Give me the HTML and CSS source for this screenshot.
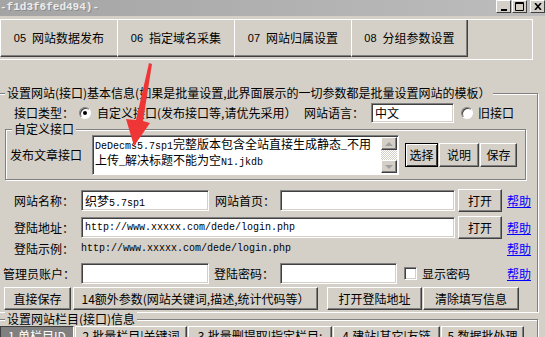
FILE: index.html
```html
<!DOCTYPE html>
<html lang="zh-CN">
<head>
    <meta charset="UTF-8">
    <meta name="viewport" content="width=device-width, initial-scale=1.0">
    <title>网站接口设置</title>
    <link rel="stylesheet" href="styles.css">
</head>
<body>
<!-- Title bar -->
<div class="titlebar">
    <span class="caption">-f1d3f6fed494)-</span>
    <div class="win-btns">
        <span class="win-btn"><svg width="8" height="8" viewBox="0 0 8 8"><rect x="1" y="6" width="6" height="2"/></svg></span>
        <span class="win-btn"><svg width="9" height="9" viewBox="0 0 9 9"><path d="M0.5 0.5h8v8h-8z M0.5 1.5h8" fill="none" stroke="#000"/></svg></span>
        <span class="win-btn close"><svg width="8" height="7" viewBox="0 0 8 7"><path d="M1 0L7 7M7 0L1 7" stroke="#000" stroke-width="1.6"/></svg></span>
    </div>
</div>

<!-- Top tool buttons -->
<div class="toolbar">
    <div class="tool"><span class="num">05</span>网站数据发布</div>
    <div class="tool"><span class="num">06</span>指定域名采集</div>
    <div class="tool"><span class="num">07</span>网站归属设置</div>
    <div class="tool"><span class="num">08</span>分组参数设置</div>
</div>

<fieldset class="group main">
    <legend>设置网站(接口)基本信息(如果是批量设置,此界面展示的一切参数都是批量设置网站的模板）</legend>

    <div class="row type-row">
        <span class="label">接口类型：</span>
        <span class="radio on"></span>
        <span class="radio-text">自定义接口(发布接口等,请优先采用）</span>
        <span class="label">网站语言：</span>
        <div class="field lang">中文</div>
        <span class="radio"></span>
        <span class="old">旧接口</span>
    </div>

    <fieldset class="group custom">
        <legend>自定义接口</legend>
        <div class="row memo-row">
            <span class="label wide">发布文章接口</span>
            <div class="memo">
                <div class="memo-text"><span class="mono">DeDecms5.7sp1</span>完整版本包含全站直接生成静态<span class="mono">_</span>不用<br>上传<span class="mono">_</span>解决标题不能为空<span class="mono">N1.jkdb</span></div>
                <div class="scroll">
                    <span class="sb-btn"><i class="up"></i></span>
                    <span class="sb-track"></span>
                    <span class="sb-btn"><i class="down"></i></span>
                </div>
            </div>
            <div class="btn-set">
                <button class="btn focus w33">选择</button>
                <button class="btn w40">说明</button>
                <button class="btn w37">保存</button>
            </div>
        </div>
    </fieldset>

    <div class="row name-row">
        <span class="label">网站名称：</span>
        <div class="field short">织梦<span class="mono">5.7sp1</span></div>
        <span class="label mid">网站首页：</span>
        <div class="field home"></div>
        <button class="btn open">打开</button>
        <a class="help" href="#">帮助</a>
    </div>

    <div class="row login-row">
        <span class="label">登陆地址：</span>
        <div class="field long mono">http://www.xxxxx.com/dede/login.php</div>
        <button class="btn open">打开</button>
        <a class="help" href="#">帮助</a>
    </div>

    <div class="row example-row">
        <span class="label">登陆示例：</span>
        <span class="example mono">http://www.xxxxx.com/dede/login.php</span>
        <a class="help" href="#">帮助</a>
    </div>

    <div class="row admin-row">
        <span class="label admin">管理员账户：</span>
        <div class="field short"></div>
        <span class="label mid2">登陆密码：</span>
        <div class="field pass"></div>
        <span class="check"></span>
        <span class="check-text">显示密码</span>
        <a class="help" href="#">帮助</a>
    </div>

    <div class="row action-row">
        <button class="btn save">直接保存</button>
        <button class="btn extra">14额外参数(网站关键词,描述,统计代码等）</button>
        <button class="btn login-open">打开登陆地址</button>
        <button class="btn clear">清除填写信息</button>
    </div>
</fieldset>

<fieldset class="group columns">
    <legend>设置网站栏目(接口)信息</legend>
    <div class="tabs">
        <span class="tab active t1">1.单栏目ID</span>
        <span class="tab t2">2.批量栏目|关键词</span>
        <span class="tab t3">3.批量删提取|指定栏目:</span>
        <span class="tab t4">4.建站|其它|友链</span>
        <span class="tab t5">5.数据批处理</span>
    </div>
</fieldset>

<!-- red annotation arrow -->
<svg class="arrow" width="30" height="88" viewBox="124 62 30 88">
    <polygon points="149,63 152,64 143,121 150,123 134,146 126,119 136,120" fill="#ef3636"/>
</svg>
</body>
</html>
```

FILE: styles.css
```css
* {
    box-sizing: border-box;
}

body {
    margin: 0;
    width: 545px;
    height: 337px;
    overflow: hidden;
    position: relative;
    background: #d4d0c8;
    color: #000;
    font-family: "Noto Sans CJK SC", "Liberation Sans", sans-serif;
    font-size: 12px;
    line-height: 14px;
}

.mono {
    font-family: "Liberation Mono", "Noto Sans CJK SC", monospace;
    font-size: 10px;
}

/* Title bar */
.titlebar {
    height: 16px;
    display: flex;
    justify-content: space-between;
    align-items: flex-start;
    background: linear-gradient(to right, #a4a4a4, #bdbdbd);
}

.caption {
    font-family: "Liberation Mono", monospace;
    font-weight: bold;
    font-size: 11px;
    line-height: 15px;
    color: #ececec;
    text-shadow: 1px 1px 0 #8a8a8a;
}

.win-btns {
    display: flex;
    gap: 1px;
}

.win-btn {
    width: 15px;
    height: 13px;
    display: flex;
    align-items: center;
    justify-content: center;
    background: #d4d0c8;
    border: 1px solid;
    border-color: #fff #404040 #404040 #fff;
}

.win-btn.close {
    margin-left: 2px;
}

/* Tool buttons */
.toolbar {
    margin-top: 3px;
    width: 533px;
    height: 41px;
    display: flex;
    align-items: flex-start;
    border: 1px solid #fff;
    border-left: 0;
}

.tool {
    width: 117px;
    height: 37px;
    display: flex;
    align-items: center;
    justify-content: center;
    border-left: 1px solid #fff;
    border-bottom: 1px solid #404040;
    box-shadow: inset 0 -1px 0 #808080;
}

.tool:last-child {
    border-right: 1px solid #404040;
    box-shadow: inset -1px -1px 0 #808080;
}

.num {
    font-family: "Liberation Sans", sans-serif;
    font-size: 11px;
    margin-right: 6px;
}

/* Group boxes */
.group {
    margin: 0 0 0 -11px;
    padding: 0 0 0 10px;
    min-width: 0;
    border: 1px solid #808080;
    box-shadow: inset 1px 1px 0 #fff, 1px 1px 0 #fff;
}

.group legend {
    margin-left: 5px;
    padding: 0 2px;
    line-height: 14px;
    background: #d4d0c8;
}

.main {
    margin-top: 26px;
    width: 549px;
    border-bottom: 0;
    padding-bottom: 2px;
}

.columns {
    width: 549px;
    height: 40px;
}

.custom {
    margin: 0 0 0 5px;
    width: 521px;
    padding: 0 0 4px 4px;
}

.custom legend {
    margin-left: 2px;
    line-height: 12px;
}

/* Rows */
.row {
    display: flex;
    align-items: center;
    width: 531px;
}

.label {
    flex: none;
    width: 60px;
    margin-left: 14px;
}

.type-row {
    margin-top: 3px;
    height: 20px;
}

.radio {
    flex: none;
    width: 12px;
    height: 12px;
    margin-left: 5px;
    position: relative;
    border-radius: 50%;
    background: #fff;
    border: 1px solid;
    border-color: #808080 #fff #fff #808080;
    box-shadow: inset 1px 1px 0 #404040;
}

.radio.on::after {
    content: "";
    position: absolute;
    left: 3px;
    top: 3px;
    width: 4px;
    height: 4px;
    border-radius: 50%;
    background: #000;
}

.radio-text {
    flex: none;
    width: 207px;
    margin-left: 6px;
    white-space: nowrap;
}

.type-row .label + .field {
    margin-left: 7px;
}

.type-row .radio-text + .label {
    margin-left: 0;
}

.field {
    flex: none;
    height: 21px;
    padding: 3px 0 0 3px;
    background: #fff;
    white-space: nowrap;
    border: 1px solid;
    border-color: #808080 #fff #fff #808080;
    box-shadow: inset 1px 1px 0 #404040, inset -1px -1px 0 #d4d0c8;
}

.field.mono {
    font-size: 10px;
    line-height: 14px;
    padding-top: 3px;
}

.lang {
    width: 83px;
    height: 20px;
    padding-top: 2px;
}

.type-row .lang + .radio {
    margin-left: 7px;
}

.old {
    margin-left: 5px;
}

/* Custom interface box */
.memo-row {
    height: 40px;
    width: auto;
}

.label.wide {
    width: 72px;
    margin-left: 0;
}

.memo {
    flex: none;
    display: flex;
    width: 307px;
    height: 40px;
    margin-left: 10px;
    background: #fff;
    border: 1px solid;
    border-color: #808080 #fff #fff #808080;
    box-shadow: inset 1px 1px 0 #404040;
}

.memo-text {
    flex: 1;
    padding: 1px 0 0 2px;
    line-height: 13px;
    white-space: nowrap;
    overflow: hidden;
}

.scroll {
    width: 16px;
    margin: 1px 1px 1px 0;
    display: flex;
    flex-direction: column;
}

.sb-btn {
    height: 13px;
    display: flex;
    align-items: center;
    justify-content: center;
    background: #d4d0c8;
    border: 1px solid;
    border-color: #fff #404040 #404040 #fff;
    box-shadow: inset -1px -1px 0 #808080;
}

.sb-btn i {
    width: 0;
    height: 0;
    border-left: 4px solid transparent;
    border-right: 4px solid transparent;
}

.sb-btn .up {
    border-bottom: 4px solid #a0a0a0;
}

.sb-btn .down {
    border-top: 4px solid #a0a0a0;
}

.sb-track {
    flex: 1;
    background: repeating-conic-gradient(#fff 0 25%, #d4d0c8 0 50%) 0 0 / 2px 2px;
}

.btn-set {
    display: flex;
    margin-left: 6px;
}

.btn {
    flex: none;
    height: 23px;
    padding: 0;
    display: flex;
    align-items: center;
    justify-content: center;
    font: inherit;
    color: #000;
    background: #d4d0c8;
    border: 1px solid;
    border-color: #fff #404040 #404040 #fff;
    box-shadow: inset -1px -1px 0 #808080;
    white-space: nowrap;
}

.btn.focus {
    border-color: #000;
    box-shadow: inset 1px 1px 0 #fff, inset -1px -1px 0 #404040;
}

.btn-set .btn {
    height: 24px;
}

.w33 { width: 33px; }
.w40 { width: 40px; margin-left: 1px; }
.w37 { width: 37px; margin-left: 1px; }

/* Site fields */
.name-row {
    margin-top: 9px;
    height: 23px;
}

.short {
    width: 128px;
    margin-left: 7px;
}

.label.mid {
    margin-left: 6px;
}

.home {
    width: 175px;
    margin-left: 5px;
}

.open {
    width: 44px;
    margin-left: 3px;
}

.help {
    margin-left: auto;
    color: #0000ff;
    text-decoration: underline;
}

.login-row {
    margin-top: 4px;
    height: 23px;
}

.long {
    width: 374px;
    margin-left: 7px;
}

.example-row {
    height: 20px;
}

.example {
    margin-left: 7px;
}

.admin-row {
    margin-top: 3px;
    height: 23px;
}

.label.admin {
    width: 72px;
    margin-left: 3px;
}

.admin-row .short {
    margin-left: 6px;
}

.label.mid2 {
    margin-left: 5px;
}

.pass {
    width: 117px;
    margin-left: 6px;
}

.check {
    flex: none;
    width: 13px;
    height: 13px;
    margin-left: 7px;
    background: #fff;
    border: 1px solid;
    border-color: #808080 #fff #fff #808080;
    box-shadow: inset 1px 1px 0 #404040, inset -1px -1px 0 #d4d0c8;
}

.check-text {
    margin-left: 5px;
}

.action-row {
    margin-top: 2px;
    height: 23px;
}

.save {
    width: 67px;
    margin-left: 4px;
}

.extra {
    width: 245px;
    margin-left: 2px;
}

.login-open {
    width: 95px;
    margin-left: 9px;
}

.clear {
    width: 96px;
    margin-left: 1px;
}

/* Column tabs */
.tabs {
    display: flex;
    gap: 1px;
}

.tab {
    flex: none;
    height: 22px;
    padding-top: 2px;
    text-align: center;
    white-space: nowrap;
    border: 1px solid;
    border-color: #fff #404040 transparent #fff;
    box-shadow: inset -1px 0 0 #808080;
}

.tab.active {
    background: #808080;
    color: #fff;
    border-color: #404040 #fff transparent #404040;
    box-shadow: none;
}

.t1 { width: 74px; }
.t2 { width: 112px; }
.t3 { width: 144px; }
.t4 { width: 107px; }
.t5 { width: 83px; }

/* Red arrow laid over the form */
.arrow {
    position: absolute;
    left: 124px;
    top: 62px;
    pointer-events: none;
}
```
